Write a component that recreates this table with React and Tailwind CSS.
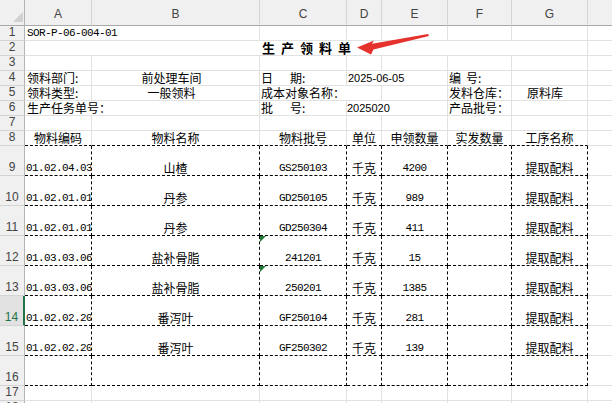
import React from "react";
import clsx from "clsx";

const CJK = "font-['Noto_Sans_CJK_SC',sans-serif]";
const MONO = "font-['Liberation_Mono','Noto_Sans_CJK_SC',monospace]";
const SANS = "font-['Liberation_Sans','Noto_Sans_CJK_SC',sans-serif]";

const GRID = "border-r border-b border-[#e1e1e1]";
const DASH = "border-r border-b border-dashed border-black";
const HEADROW = "border-r border-b border-r-[#e1e1e1] border-b-black [border-right-style:solid] [border-bottom-style:dashed]";

function Cell({ className, children }) {
  return (
    <div
      className={clsx(
        "relative flex items-end overflow-hidden whitespace-nowrap bg-white text-black",
        className
      )}
    >
      {children}
    </div>
  );
}

function RowHead({ n, active }) {
  return (
    <div
      className={clsx(
        "flex items-end justify-center border-b border-r pb-[1px] text-[12px] leading-[13px]",
        SANS,
        active
          ? "border-b-[#d4d4d4] border-r-[2px] border-r-[#217346] bg-[#e2e2e2] text-[#217346]"
          : "border-b-[#d4d4d4] border-r-[#b4b4b4] bg-[#f0f0f0] text-[#444]"
      )}
    >
      {n}
    </div>
  );
}

function ColHead({ l }) {
  return (
    <div
      className={clsx(
        "flex items-end justify-center border-b border-r border-b-[#a8a8a8] border-r-[#d4d4d4] bg-[#f0f0f0] pb-[4px] text-[12px] leading-[13px] text-[#444]",
        SANS
      )}
    >
      {l}
    </div>
  );
}

const data = [
  ["01.02.04.03", "山楂", "GS250103", "4200"],
  ["01.02.01.01", "丹参", "GD250105", "989"],
  ["01.02.01.01", "丹参", "GD250304", "411"],
  ["01.03.03.06", "盐补骨脂", "241201", "15"],
  ["01.03.03.06", "盐补骨脂", "250201", "1385"],
  ["01.02.02.20", "番泻叶", "GF250104", "281"],
  ["01.02.02.20", "番泻叶", "GF250302", "139"],
];

function GreenMark() {
  return (
    <div className="absolute left-0 top-0 h-0 w-0 border-r-[6px] border-t-[6px] border-r-transparent border-t-[#1e7b34]" />
  );
}

export default function App() {
  return (
    <div className="relative h-[403px] w-[612px] overflow-hidden bg-white">
      <div className="grid grid-cols-[25px_67px_168px_87px_35px_66px_64px_76px_64px] grid-rows-[26px_repeat(8,15px)_repeat(8,30px)_15px_15px]">
        {/* header row */}
        <div className="relative border-b border-r border-b-[#a8a8a8] border-r-[#b4b4b4] bg-[#f0f0f0]">
          <svg className="absolute right-[1px] bottom-[3px]" width="10" height="10" viewBox="0 0 10 10">
            <polygon points="10,0 10,10 0,10" fill="#d0d0d0" />
          </svg>
        </div>
        {["A", "B", "C", "D", "E", "F", "G", ""].map((l, i) => (
          <ColHead key={i} l={l} />
        ))}

        {/* row 1 */}
        <RowHead n={1} />
        <Cell className={clsx("col-span-2 pl-[2px] text-[11px] leading-[13px] tracking-[-0.6px]", GRID, MONO)}>SOR-P-06-004-01</Cell>
        <Cell className={GRID} />
        <Cell className={GRID} />
        <Cell className={GRID} />
        <Cell className={GRID} />
        <Cell className={GRID} />
        <Cell className={GRID} />

        {/* row 2 */}
        <RowHead n={2} />
        <Cell className={clsx("col-span-7 justify-center text-[13px] font-bold leading-[15px]", GRID, CJK)}>
          <span className="flex gap-[6px] pl-[1px]">
            <span>生</span>
            <span>产</span>
            <span>领</span>
            <span>料</span>
            <span>单</span>
          </span>
        </Cell>
        <Cell className={GRID} />

        {/* row 3 */}
        <RowHead n={3} />
        {[0, 1, 2, 3, 4, 5, 6, 7].map((i) => (
          <Cell key={i} className={GRID} />
        ))}

        {/* row 4 */}
        <RowHead n={4} />
        <Cell className={clsx("pl-[2px] text-[12px] leading-[15px]", GRID, CJK)}>领料部门:</Cell>
        <Cell className={clsx("justify-center pr-[8px] text-[12px] leading-[15px]", GRID, CJK)}>前处理车间</Cell>
        <Cell className={clsx("pl-[1px] text-[12px] leading-[15px]", GRID, CJK)}>
          <span>日</span>
          <span className="ml-[17px]">期:</span>
        </Cell>
        <Cell className={clsx("col-span-2 pl-[1px] text-[11px] leading-[14px]", GRID, SANS)}>2025-06-05</Cell>
        <Cell className={clsx("pl-[1px] text-[12px] leading-[15px]", GRID, CJK)}>
          <span>编</span>
          <span className="ml-[5px]">号:</span>
        </Cell>
        <Cell className={GRID} />
        <Cell className={GRID} />

        {/* row 5 */}
        <RowHead n={5} />
        <Cell className={clsx("pl-[2px] text-[12px] leading-[15px]", GRID, CJK)}>领料类型:</Cell>
        <Cell className={clsx("justify-center pr-[8px] text-[12px] leading-[15px]", GRID, CJK)}>一般领料</Cell>
        <Cell className={clsx("col-span-2 pl-[1px] text-[12px] leading-[15px]", GRID, CJK)}>成本对象名称：</Cell>
        <Cell className={GRID} />
        <Cell className={clsx("pl-[1px] text-[12px] leading-[15px]", GRID, CJK)}>发料仓库：</Cell>
        <Cell className={clsx("justify-center pr-[9px] text-[12px] leading-[15px]", GRID, CJK)}>原料库</Cell>
        <Cell className={GRID} />

        {/* row 6 */}
        <RowHead n={6} />
        <Cell className={clsx("col-span-2 pl-[2px] text-[12px] leading-[15px]", GRID, CJK)}>生产任务单号：</Cell>
        <Cell className={clsx("pl-[1px] text-[12px] leading-[15px]", GRID, CJK)}>
          <span>批</span>
          <span className="ml-[17px]">号:</span>
        </Cell>
        <Cell className={clsx("col-span-2 pl-[0px] text-[11px] leading-[14px]", GRID, SANS)}>2025020</Cell>
        <Cell className={clsx("pl-[1px] text-[12px] leading-[15px]", GRID, CJK)}>产品批号：</Cell>
        <Cell className={GRID} />
        <Cell className={GRID} />

        {/* row 7 */}
        <RowHead n={7} />
        {[0, 1, 2, 3, 4, 5, 6, 7].map((i) => (
          <Cell key={i} className={GRID} />
        ))}

        {/* row 8 */}
        <RowHead n={8} />
        {["物料编码", "物料名称", "物料批号", "单位", "申领数量", "实发数量", "工序名称"].map((t, i) => (
          <Cell key={i} className={clsx("justify-center text-[12px] leading-[15px]", HEADROW, CJK)}>
            {t}
          </Cell>
        ))}
        <Cell className={GRID} />

        {/* data rows 9-15 */}
        {data.map((r, i) => (
          <React.Fragment key={i}>
            <RowHead n={9 + i} active={i === 5} />
            <Cell className={clsx("pl-[1px] pb-[1px] text-[11px] leading-[12px] tracking-[-0.6px]", DASH, MONO)}>{r[0]}</Cell>
            <Cell className={clsx("justify-center text-[12px] leading-[15px]", DASH, CJK)}>{r[1]}</Cell>
            <Cell className={clsx("justify-center pb-[1px] text-[11px] leading-[12px] tracking-[-0.6px]", DASH, MONO)}>
              {(i === 3 || i === 4) && <GreenMark />}
              {r[2]}
            </Cell>
            <Cell className={clsx("justify-center text-[12px] leading-[15px]", DASH, CJK)}>千克</Cell>
            <Cell className={clsx("justify-center pb-[1px] text-[11px] leading-[12px] tracking-[-0.6px]", DASH, MONO)}>{r[3]}</Cell>
            <Cell className={DASH} />
            <Cell className={clsx("justify-center text-[12px] leading-[15px]", DASH, CJK)}>提取配料</Cell>
            <Cell className={GRID} />
          </React.Fragment>
        ))}

        {/* row 16 */}
        <RowHead n={16} />
        {[0, 1, 2, 3, 4, 5, 6].map((i) => (
          <Cell key={i} className={DASH} />
        ))}
        <Cell className={GRID} />

        {/* row 17, 18 */}
        <RowHead n={17} />
        {[0, 1, 2, 3, 4, 5, 6, 7].map((i) => (
          <Cell key={i} className={GRID} />
        ))}
        <RowHead n={18} />
        {[0, 1, 2, 3, 4, 5, 6, 7].map((i) => (
          <Cell key={i} className={GRID} />
        ))}
      </div>

      {/* red arrow annotation */}
      <svg className="pointer-events-none absolute left-0 top-0" width="612" height="403" viewBox="0 0 612 403">
        <polygon
          points="357,47.5 374,40.5 372,43.8 428,34 429,36 373.5,49.5 371,54.5"
          fill="#e5322d"
        />
      </svg>
    </div>
  );
}
